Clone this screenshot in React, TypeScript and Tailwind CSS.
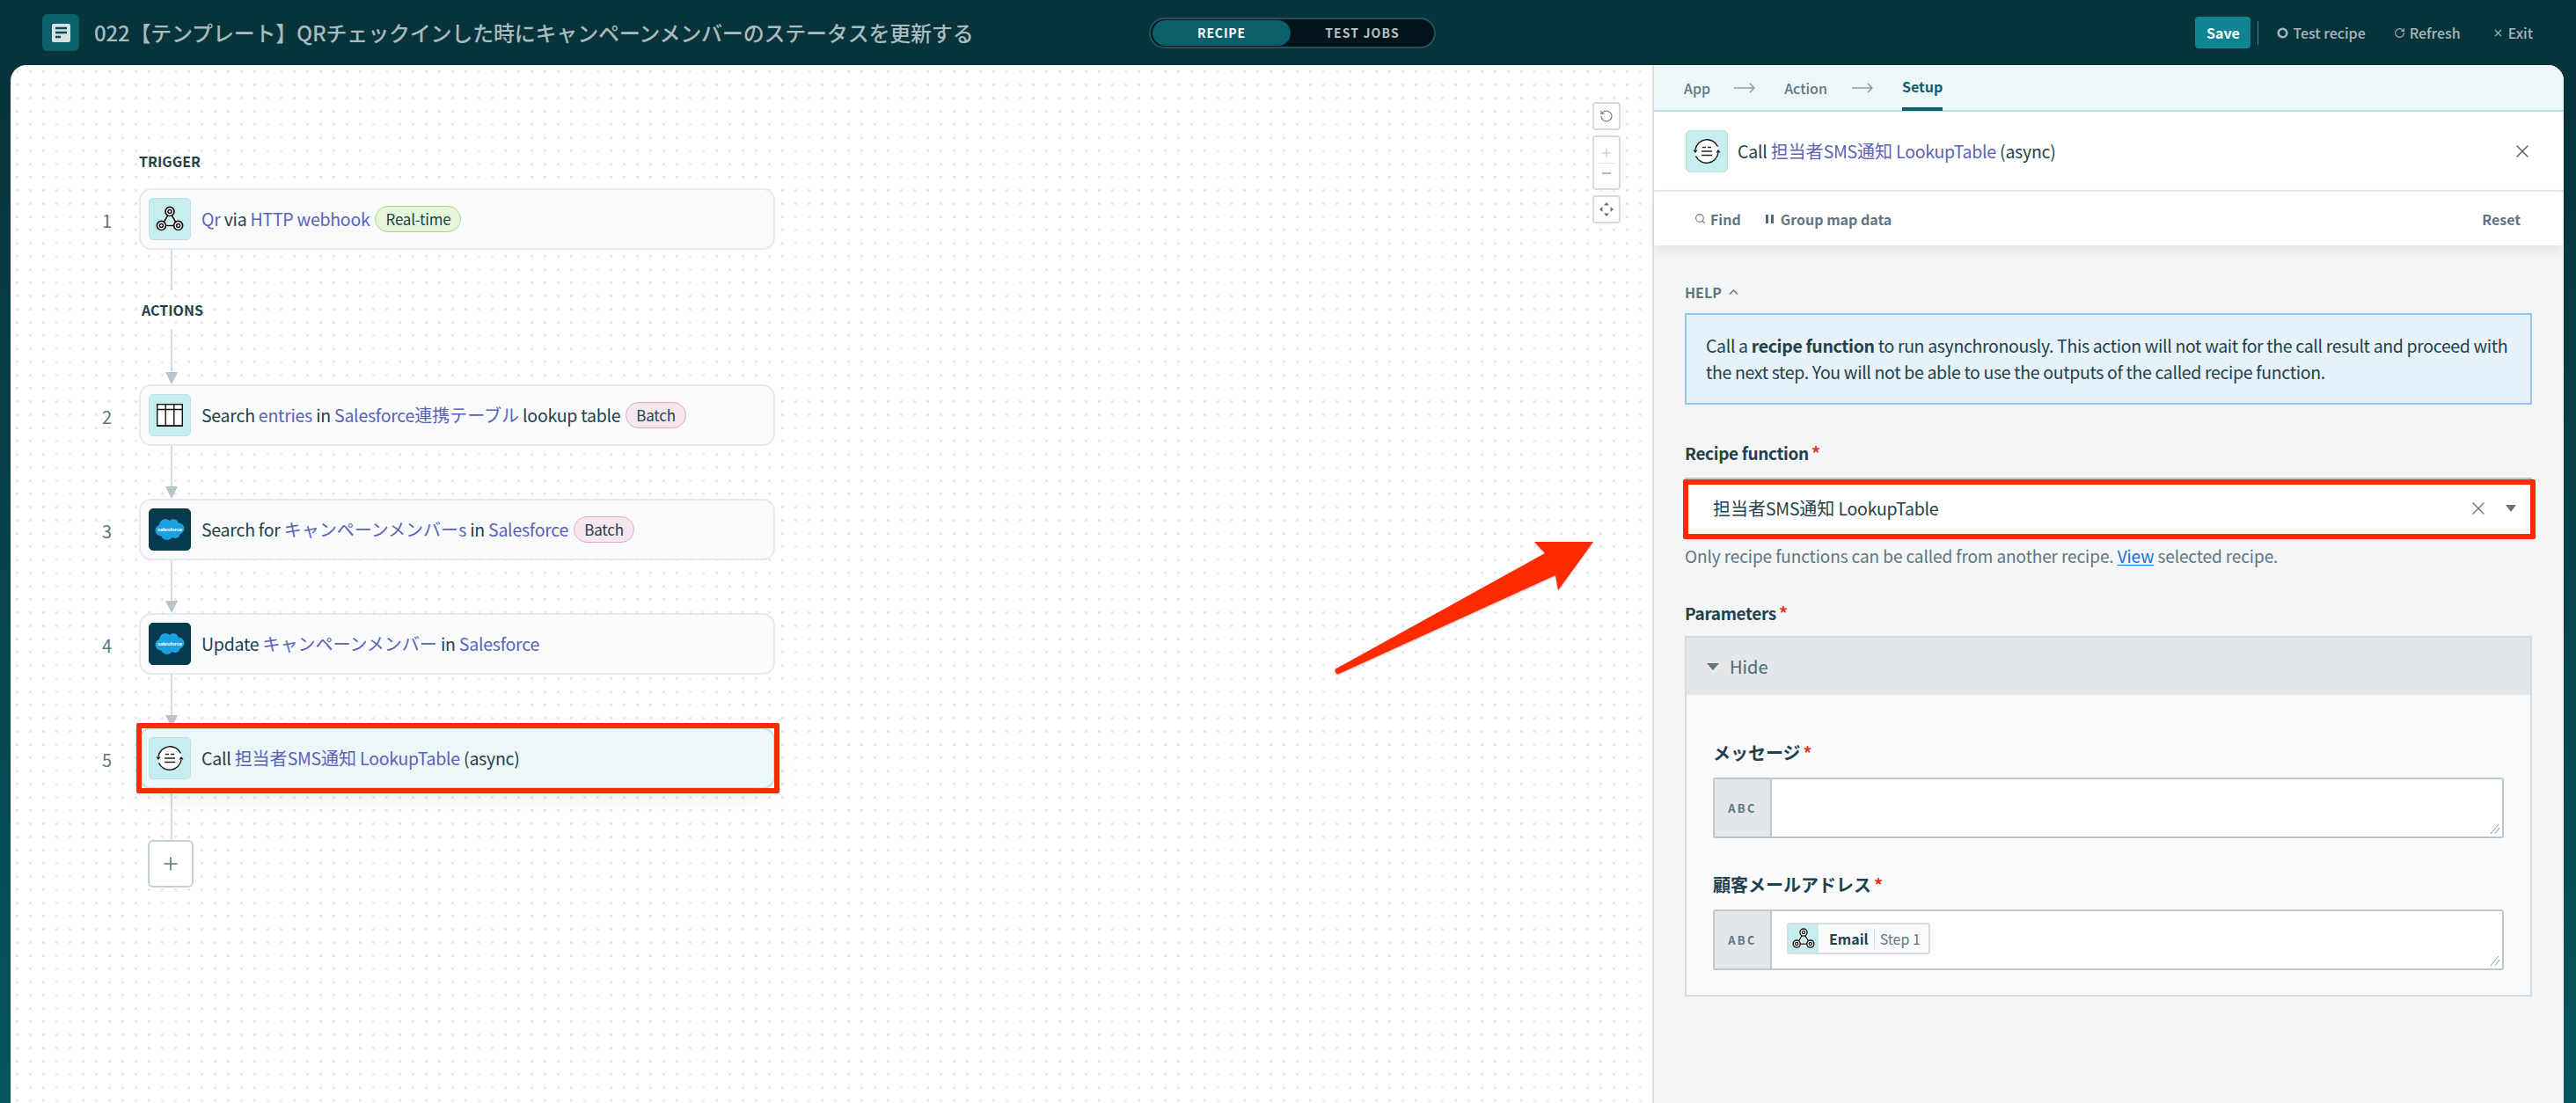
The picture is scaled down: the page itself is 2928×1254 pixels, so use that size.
import { ReactNode } from 'react'
import { Minus, Plus, RotateCcw, RotateCw, Search, X } from 'lucide-react'

const ink = 'text-[#23414a]'

function WebhookIcon({ size = 32 }: { size?: number }) {
  return (
    <svg width={size} height={size} viewBox="0 0 30 30" fill="none">
      <path d="M15 7L6 22H24L15 7" stroke="#fff" strokeWidth="4" strokeLinejoin="round" />
      <path d="M13 11L8.5 18.5M10 22H20M17 11L21.5 18.5" stroke="#111" strokeWidth="1.5" />
      <circle cx="15" cy="7" r="4.7" fill="#fff" stroke="#111" strokeWidth="1.6" />
      <circle cx="15" cy="7" r="1.9" fill="#fff" stroke="#111" strokeWidth="1.4" />
      <circle cx="6" cy="22" r="4.7" fill="#fff" stroke="#111" strokeWidth="1.6" />
      <circle cx="6" cy="22" r="1.9" fill="#fff" stroke="#111" strokeWidth="1.4" />
      <circle cx="24" cy="22" r="4.7" fill="#fff" stroke="#111" strokeWidth="1.6" />
      <circle cx="24" cy="22" r="1.9" fill="#fff" stroke="#111" strokeWidth="1.4" />
    </svg>
  )
}

function TableIcon() {
  return (
    <svg width="30" height="26" viewBox="0 0 30 26" fill="#fff" stroke="#111" strokeWidth="1.4">
      <rect x="0.7" y="0.7" width="28.6" height="24.6" />
      <path d="M0.7 6.5H29.3M10.2 0.7V25.3M19.8 0.7V25.3" />
      <path d="M0.7 25.2H29.3" strokeWidth="2" />
    </svg>
  )
}

function SalesforceIcon() {
  return (
    <svg width="34" height="26" viewBox="0 0 34 26">
      <g fill="#1ba1e2">
        <circle cx="12" cy="8" r="7" />
        <circle cx="21" cy="7" r="6" />
        <circle cx="27" cy="12" r="6.5" />
        <circle cx="7" cy="14" r="6.5" />
        <circle cx="14" cy="18" r="7" />
        <circle cx="23" cy="17" r="6" />
      </g>
      <text x="17" y="14.5" fontSize="6.2" fill="#fff" textAnchor="middle" fontWeight="600" fontFamily="Liberation Sans, sans-serif">
        salesforce
      </text>
    </svg>
  )
}

function FunctionIcon() {
  return (
    <svg width="34" height="34" viewBox="0 0 34 34" fill="none">
      <circle cx="17" cy="17" r="13.5" fill="#fff" />
      <path d="M4 15A13.5 13.5 0 0 1 29.5 11.5M30 19A13.5 13.5 0 0 1 4.5 22.5" stroke="#111" strokeWidth="1.4" />
      <path d="M1.5 15.5H6.5L4 19ZM27.5 18.5H32.5L30 15Z" fill="#111" />
      <path d="M12 12.5H16M18 12.5H22M11 17H23M11 21.5H23" stroke="#222" strokeWidth="1.4" />
    </svg>
  )
}

function AppIcon({ dark, size = 'h-[48px] w-[48px]', children }: { dark?: boolean; size?: string; children: ReactNode }) {
  return (
    <div
      className={`flex shrink-0 items-center justify-center rounded-[5px] border ${size} ${
        dark ? 'border-[#053b4d] bg-[#053b4d]' : 'border-[#b9e3e3] bg-[#c6eeee]'
      }`}
    >
      {children}
    </div>
  )
}

function L({ children }: { children: ReactNode }) {
  return <span className="text-[#5a62b8]">{children}</span>
}

// japanese runs keep the full 20px, latin around them is set tighter
function J({ children }: { children: ReactNode }) {
  return <span className="text-[20px] tracking-normal">{children}</span>
}

function Tag({ kind, children }: { kind: 'green' | 'pink'; children: ReactNode }) {
  return (
    <span
      className={`ml-[6px] flex h-[30px] items-center rounded-full border px-[11px] text-[17px] tracking-[-0.2px] ${
        kind === 'green' ? 'border-[#a6dc7e] bg-[#e6f6da]' : 'border-[#e3a9c8] bg-[#f6e6ee]'
      }`}
    >
      {children}
    </span>
  )
}

function Step({
  n,
  icon,
  active,
  children,
}: {
  n: number
  icon: ReactNode
  active?: boolean
  children: ReactNode
}) {
  return (
    <div className="flex">
      <div className="w-[146px] pr-[31px] pt-[24px] text-right text-[20px] leading-[26px] text-[#5f7681]">{n}</div>
      <div
        className={`relative flex h-[70px] w-[723px] items-center gap-[12px] rounded-[14px] border-2 pl-[9px] text-[19.5px] tracking-[-0.25px] ${ink} ${
          active
            ? 'border-[#b9e3e3] bg-[#edf6f9] shadow-[0_14px_22px_rgba(30,60,70,0.07)]'
            : 'border-[#e6e9ed] bg-[#f9fafc]'
        }`}
      >
        {icon}
        <div className="flex items-center whitespace-pre">{children}</div>
        {active && (
          <div className="absolute -bottom-[7px] -left-[5px] -right-[7px] -top-[7px] rounded-[2px] border-[6px] border-[#ff2a00]" />
        )}
      </div>
    </div>
  )
}

function Link({ height = 46, arrow = true }: { height?: number; arrow?: boolean }) {
  return (
    <div className="ml-[176px] flex w-[14px] flex-col items-center">
      <div className="w-[2px] bg-[#d3dae0]" style={{ height }} />
      {arrow && <div className="h-0 w-0 border-x-[7px] border-t-[14px] border-x-transparent border-t-[#b8c4cc]" />}
    </div>
  )
}

function SectionLabel({ className, children }: { className: string; children: ReactNode }) {
  return <div className={`h-[20px] text-[16px] font-semibold leading-[20px] ${ink} ${className}`}>{children}</div>
}

function Required() {
  return <span className="ml-[3px] text-[20px] tracking-normal text-[#e8341c]">*</span>
}

function FieldLabel({ className, latin, children }: { className: string; latin?: boolean; children: ReactNode }) {
  return (
    <div
      className={`h-[26px] font-semibold leading-[26px] ${ink} ${className} ${
        latin ? 'text-[19px] tracking-[-0.35px]' : 'text-[20px]'
      }`}
    >
      {children}
      <Required />
    </div>
  )
}

function TextField({ children }: { children?: ReactNode }) {
  return (
    <div className="relative flex h-[69px] overflow-hidden rounded-[3px] border-2 border-[#bcc7d0] bg-white">
      <div className="flex w-[65px] items-center justify-center border-r-2 border-[#bcc7d0] bg-[#e3e7ea] text-[13px] font-semibold tracking-[0.18em] text-[#5f7681]">
        ABC
      </div>
      <div className="flex-1 pl-[17px] pt-[13px]">{children}</div>
      <svg className="absolute bottom-[2px] right-[2px]" width="12" height="13" viewBox="0 0 12 13" stroke="#8e979e" strokeWidth="1">
        <path d="M1 12L10 1M6 12L11 5" />
      </svg>
    </div>
  )
}

function ZoomBox({ className, children }: { className: string; children: ReactNode }) {
  return (
    <div className={`flex w-[32px] flex-col items-center justify-center rounded-[4px] border-2 border-[#d5dbe0] bg-white text-[#8c9ca5] ${className}`}>
      {children}
    </div>
  )
}

function HeaderAction({ icon, children }: { icon: ReactNode; children: ReactNode }) {
  return (
    <div className="flex items-center gap-[5px] text-[16px] font-medium text-[#a7b6ba]">
      {icon}
      {children}
    </div>
  )
}

export default function App() {
  return (
    <div className="flex h-[1254px] w-[2928px] flex-col overflow-hidden bg-gradient-to-b from-[#07343b] from-10% to-[#05565f] font-['Noto_Sans_CJK_JP','Noto_Sans',sans-serif]">
      {/* top bar */}
      <header className="flex h-[74px] shrink-0 items-center pl-[48px] pr-[49px]">
        <div className="flex h-[42px] w-[42px] items-center justify-center rounded-[6px] bg-[#0b5f6b]">
          <svg width="21" height="21" viewBox="0 0 21 21">
            <rect x="0" y="0" width="21" height="21" rx="2" fill="#d5e1e3" />
            <path d="M4 5H17M4 10H17M4 15H10" stroke="#0b4a55" strokeWidth="2.4" />
          </svg>
        </div>
        <div className="ml-[17px] w-[1199px] whitespace-nowrap text-[24px] font-medium tracking-[-0.2px] text-[#a9babe]">
          022【テンプレート】QRチェックインした時にキャンペーンメンバーのステータスを更新する
        </div>
        <div className="flex h-[35px] w-[326px] items-center rounded-full border-2 border-[#28505a] bg-[#03141a] pl-[2px]">
          <div className="flex h-[29px] w-[157px] items-center justify-center rounded-full bg-[#0b5f6b] text-[14px] font-bold tracking-[0.06em] text-white">
            RECIPE
          </div>
          <div className="flex-1 text-center text-[14px] font-bold tracking-[0.08em] text-[#b4c2c6]">TEST JOBS</div>
        </div>
        <div className="ml-auto flex h-[36px] w-[63px] items-center justify-center rounded-[4px] bg-[#0f8594] text-[16px] font-semibold text-white">
          Save
        </div>
        <div className="ml-[8px] mr-[21px] h-[27px] w-[1px] bg-[#5d7b82]" />
        <HeaderAction
          icon={
            <svg width="13" height="13" viewBox="0 0 13 13">
              <circle cx="6.5" cy="6.5" r="4.8" fill="none" stroke="#a7b6ba" strokeWidth="2.6" />
            </svg>
          }
        >
          Test recipe
        </HeaderAction>
        <div className="ml-[32px]">
          <HeaderAction icon={<RotateCw size={13} strokeWidth={2} />}>Refresh</HeaderAction>
        </div>
        <div className="ml-[36px]">
          <HeaderAction icon={<X size={13} strokeWidth={2} />}>Exit</HeaderAction>
        </div>
      </header>

      <div className="ml-[12px] mr-[14px] flex min-h-0 flex-1 overflow-hidden rounded-t-[18px] bg-white">
        {/* recipe canvas */}
        <main className="relative w-[1866px] shrink-0 bg-[radial-gradient(circle,#e5e8eb_1.3px,transparent_1.7px)] bg-[length:15px_15px] pt-[99px]">
          <SectionLabel className="ml-[146px] mb-[21px]">TRIGGER</SectionLabel>
          <Step n={1} icon={<AppIcon><WebhookIcon /></AppIcon>}>
            <L>Qr</L> via <L>HTTP webhook</L>
            <Tag kind="green">Real-time</Tag>
          </Step>
          <Link arrow={false} />
          <SectionLabel className="ml-[149px] mt-[12px] mb-[13px]">ACTIONS</SectionLabel>
          <Link height={48} />
          <Step n={2} icon={<AppIcon><TableIcon /></AppIcon>}>
            Search <L>entries</L> in <L>Salesforce<J>連携テーブル</J></L> lookup table
            <Tag kind="pink">Batch</Tag>
          </Step>
          <Link />
          <Step n={3} icon={<AppIcon dark><SalesforceIcon /></AppIcon>}>
            Search for <L><J>キャンペーンメンバー</J>s</L> in <L>Salesforce</L>
            <Tag kind="pink">Batch</Tag>
          </Step>
          <Link />
          <Step n={4} icon={<AppIcon dark><SalesforceIcon /></AppIcon>}>
            Update <L><J>キャンペーンメンバー</J></L> in <L>Salesforce</L>
          </Step>
          <Link />
          <Step active n={5} icon={<AppIcon><FunctionIcon /></AppIcon>}>
            Call <L><J>担当者</J>SMS<J>通知</J> LookupTable</L> (async)
          </Step>
          <Link height={59} arrow={false} />
          <div className="ml-[156px] -mt-[1px] flex h-[54px] w-[52px] items-center justify-center rounded-[6px] border-2 border-[#c5cfd6] bg-white text-[#5f7681]">
            <Plus size={24} strokeWidth={1.6} />
          </div>

          {/* zoom controls */}
          <div className="absolute left-[1798px] top-[42px] flex flex-col gap-[6px]">
            <ZoomBox className="h-[32px]">
              <RotateCcw size={16} strokeWidth={1.6} className="text-[#5f7681]" />
            </ZoomBox>
            <ZoomBox className="h-[62px] gap-[3px]">
              <Plus size={16} strokeWidth={1.6} className="text-[#b6c1c8]" />
              <div className="h-[1px] w-[18px] bg-[#dfe3e7]" />
              <Minus size={16} strokeWidth={1.6} className="text-[#5f7681]" />
            </ZoomBox>
            <ZoomBox className="h-[32px]">
              <svg width="18" height="18" viewBox="0 0 18 18" fill="#5f7681">
                <path d="M9 1L12 4.5H6ZM9 17L6 13.5H12ZM1 9L4.5 6V12ZM17 9L13.5 12V6Z" />
              </svg>
            </ZoomBox>
          </div>

          {/* annotation arrow */}
          <svg
            className="absolute left-[1503px] top-[536px] drop-shadow-[0_1px_1px_rgba(0,0,0,0.25)]"
            width="300"
            height="160"
            viewBox="1515 610 300 160"
          >
            <path
              d="M1518 760.5L1756 629L1744 616H1811L1771 671L1768 654L1522 766Q1519 767 1518 764.5Q1517 762 1518 760.5Z"
              fill="#ff2a00"
            />
          </svg>
        </main>

        {/* step config panel */}
        <aside className="flex min-w-0 flex-1 flex-col border-l-2 border-[#dde1e5] bg-[#f3f5f7]">
          <nav className="flex h-[53px] shrink-0 items-center border-b-2 border-[#b5dfe3] bg-[#edf6f9] pl-[34px] text-[16px] font-medium text-[#5f7681]">
            <span>App</span>
            <svg className="ml-[27px] mr-[33px]" width="24" height="12" viewBox="0 0 24 12" fill="none" stroke="#8c9ca5" strokeWidth="1.5">
              <path d="M0 6H23M18 1L23 6L18 11" />
            </svg>
            <span>Action</span>
            <svg className="ml-[28px] mr-[33px]" width="24" height="12" viewBox="0 0 24 12" fill="none" stroke="#8c9ca5" strokeWidth="1.5">
              <path d="M0 6H23M18 1L23 6L18 11" />
            </svg>
            <span className="flex h-[53px] items-center border-b-[4px] border-[#0b5f6b] pt-[1px] font-semibold text-[#0b5f6b]">Setup</span>
          </nav>
          <div className="flex h-[91px] shrink-0 items-center gap-[11px] border-b-2 border-[#e3e7eb] bg-white pl-[36px] pr-[35px] text-[19.5px] tracking-[-0.25px] text-[#23414a]">
            <AppIcon><FunctionIcon /></AppIcon>
            <div className="whitespace-pre">
              Call <L><J>担当者</J>SMS<J>通知</J> LookupTable</L> (async)
            </div>
            <X size={24} strokeWidth={1.5} className="ml-auto text-[#4f6873]" />
          </div>
          <div className="relative flex h-[61px] shrink-0 items-center bg-white pl-[46px] pr-[49px] text-[16px] font-semibold text-[#5f7681] shadow-[0_6px_12px_rgba(40,60,70,0.07)]">
            <Search size={13} strokeWidth={2} />
            <span className="ml-[5px]">Find</span>
            <svg className="ml-[26px]" width="14" height="14" viewBox="0 0 14 14" fill="#4f6873">
              <rect x="2" y="2" width="3" height="10" />
              <rect x="8" y="2" width="3" height="10" />
            </svg>
            <span className="ml-[5px]">Group map data</span>
            <span className="ml-auto">Reset</span>
          </div>
          <div className="flex-1 pl-[35px] pr-[36px] pt-[43px]">
            <div className="flex h-[20px] items-center gap-[8px] text-[16px] font-semibold leading-[20px] text-[#5f7681]">
              HELP
              <svg width="11" height="8" viewBox="0 0 11 8" fill="none" stroke="#5f7681" strokeWidth="1.5">
                <path d="M1 6.5L5.5 2L10 6.5" />
              </svg>
            </div>
            <div className="mt-[14px] flex h-[104px] items-center border-2 border-[#93c5f5] bg-[#e6f1fa] px-[22px] text-[19.5px] leading-[30px] tracking-[-0.35px] text-[#23414a]">
              <p>
                Call a <b className="font-semibold">recipe function</b> to run asynchronously. This action will not wait for the call result and proceed with the next step. You will not be able to use the outputs of the called recipe function.
              </p>
            </div>
            <FieldLabel latin className="mt-[42px]">Recipe function</FieldLabel>
            <div className="relative mt-[15px] flex h-[68px] items-center border-t-2 border-[#bcc7d0] bg-white pl-[32px] pr-[18px] text-[19.5px] tracking-[-0.25px] text-[#23414a]">
              <span className="whitespace-pre"><J>担当者</J>SMS<J>通知</J> LookupTable</span>
              <X size={24} strokeWidth={1.4} className="ml-auto text-[#5f7681]" />
              <div className="ml-[19px] h-0 w-0 border-x-[6px] border-t-[8px] border-x-transparent border-t-[#5f7681]" />
              <div className="absolute -bottom-[2px] -left-[2px] -right-[4px] top-0 rounded-[2px] border-[6px] border-[#ff2a00]" />
            </div>
            <div className="mt-[9px] h-[24px] text-[19px] leading-[24px] tracking-[-0.1px] text-[#5f7681]">
              Only recipe functions can be called from another recipe. <span className="text-[#1a6fd6] underline underline-offset-2">View</span> selected recipe.
            </div>
            <FieldLabel latin className="mt-[40px]">Parameters</FieldLabel>
            <div className="mt-[13px] border-2 border-[#d5dbe0] bg-[#f9fafc]">
              <div className="flex h-[65px] items-center bg-[#e3e7ea] pl-[23px] text-[20px] text-[#4f6873]">
                <div className="h-0 w-0 border-x-[7px] border-t-[8px] border-x-transparent border-t-[#5f7681]" />
                <span className="ml-[12px]">Hide</span>
              </div>
              <div className="px-[30px] pb-[28px] pt-[53px]">
                <FieldLabel className="mb-[15px]">メッセージ</FieldLabel>
                <TextField />
                <FieldLabel className="mb-[15px] mt-[40px]">顧客メールアドレス</FieldLabel>
                <TextField>
                  <div className="flex h-[36px] w-[163px] items-center overflow-hidden rounded-[3px] border-2 border-[#d5dbe0] bg-[#f9fafc] text-[16px]">
                    <div className="flex h-full w-[34px] shrink-0 items-center justify-center bg-[#c6eeee]">
                      <WebhookIcon size={26} />
                    </div>
                    <span className={`ml-[12px] font-semibold ${ink}`}>Email</span>
                    <span className="mx-[6px] h-[24px] w-[1px] bg-[#d5dbe0]" />
                    <span className="text-[#5f7681]">Step 1</span>
                  </div>
                </TextField>
              </div>
            </div>
          </div>
        </aside>
      </div>
    </div>
  )
}
